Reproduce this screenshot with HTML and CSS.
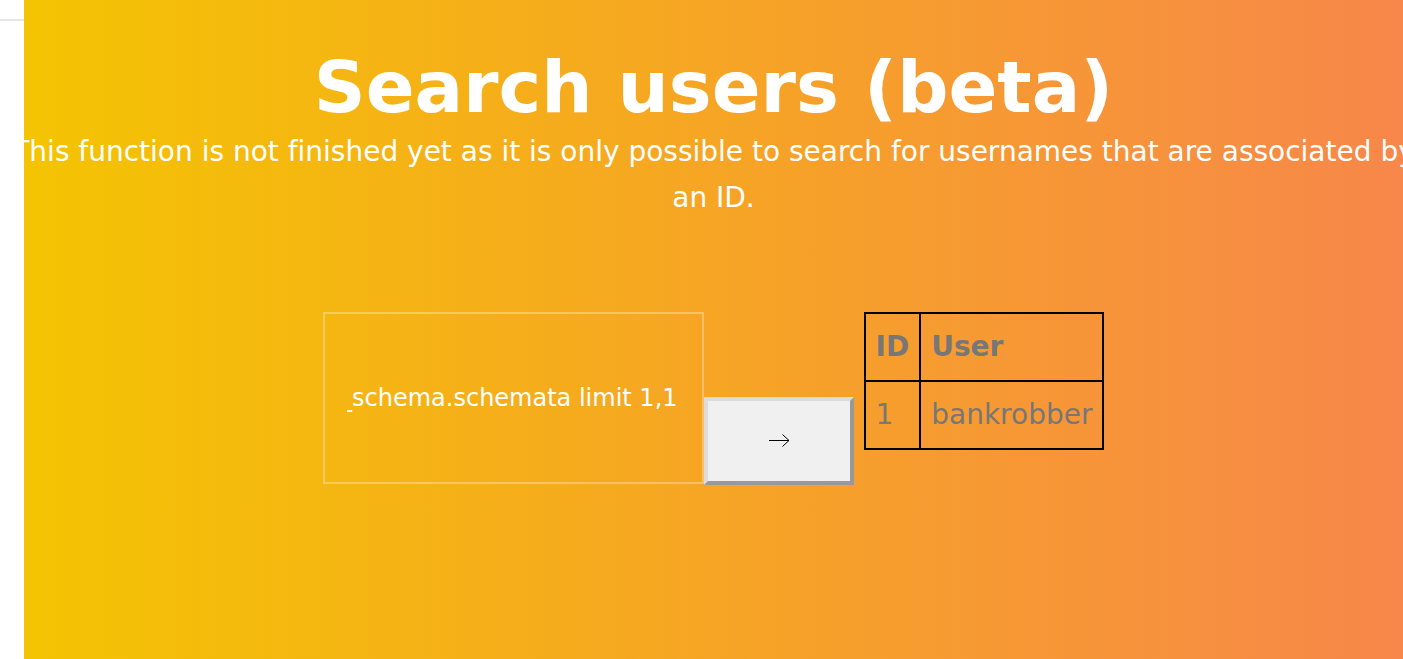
FILE: index.html
```html
<!DOCTYPE html>
<html lang="en">
<head>
<meta charset="utf-8">
<title>Search users (beta)</title>
<link rel="stylesheet" href="styles.css">
</head>
<body>
<aside class="side"><div class="side-top"></div></aside>
<main class="hero">
  <h1 class="title">Search users (beta)</h1>
  <p class="lead">This function is not finished yet as it is only possible to search for usernames that are associated by an ID.</p>
  <div class="row">
    <form class="search">
      <input class="query" type="text" dir="rtl" value="union select schema_name from information_schema.schemata limit 1,1">
      <button class="go" type="button" aria-label="Search">
        <svg width="22" height="16" viewBox="0 0 22 16"><path d="M1 7.5H21M14.5 1.5L21 7.5L14.5 13.5" fill="none" stroke="#000" stroke-width="1"/></svg>
      </button>
    </form>
    <table class="results">
      <thead><tr><th>ID</th><th>User</th></tr></thead>
      <tbody><tr><td>1</td><td>bankrobber</td></tr></tbody>
    </table>
  </div>
</main>
</body>
</html>
```
FILE: styles.css
```css
html, body {
  margin: 0;
  height: 100%;
  overflow: hidden;
}
body {
  display: flex;
  background: #fff;
  font-family: "DejaVu Sans", sans-serif;
  font-variant-ligatures: none;
}
.side {
  width: 24px;
  flex: none;
}
.side-top {
  height: 19px;
  border-bottom: 2px solid #e6e6e6;
}
.hero {
  flex: 1;
  min-width: 0;
  height: 659px;
  display: flex;
  flex-direction: column;
  align-items: center;
  background: linear-gradient(to right, #f4c402, #f6a524 50%, #f7874a);
  color: #fff;
}
.title {
  margin: 45px 0 0;
  font-size: 72px;
  font-weight: bold;
  line-height: 84px;
  white-space: nowrap;
}
.lead {
  margin: 0;
  width: 1420px;
  flex: none;
  font-size: 28px;
  line-height: 46px;
  text-align: center;
}
.row {
  margin-top: 91px;
  display: flex;
  align-items: flex-start;
  gap: 10px;
}
.search {
  display: flex;
  align-items: flex-end;
}
.query {
  box-sizing: border-box;
  width: 381px;
  height: 172px;
  padding: 0 24px 0 22px;
  border: 2px solid rgba(255, 255, 255, 0.3);
  background: transparent;
  color: #fff;
  font-family: "DejaVu Sans", sans-serif;
  font-size: 24px;
  font-variant-ligatures: none;
  outline: none;
}
.go {
  box-sizing: border-box;
  width: 150px;
  height: 88px;
  margin-bottom: -1px;
  border: 4px solid;
  border-color: #dcdcdc #999 #999 #dcdcdc;
  background: #f0f0f0;
  display: flex;
  align-items: center;
  justify-content: center;
  padding: 0;
}
.go svg {
  display: block;
  margin-top: -1px;
}
.results {
  border-collapse: collapse;
  border: 2px solid #000;
  color: #777;
  font-size: 28px;
  line-height: 46px;
}
.results th,
.results td {
  border: 2px solid #000;
  padding: 10px;
  text-align: left;
}
.results th {
  font-weight: bold;
}
```
